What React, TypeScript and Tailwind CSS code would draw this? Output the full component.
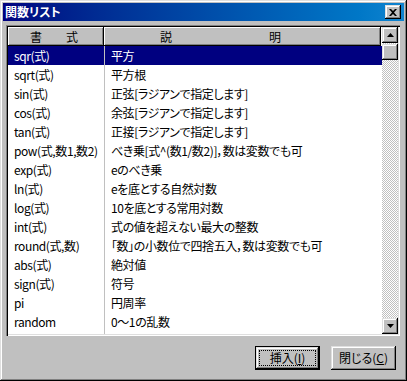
import React from "react";

const kansu = [
  { shiki: "sqr(式)", setsumei: "平方" },
  { shiki: "sqrt(式)", setsumei: "平方根" },
  { shiki: "sin(式)", setsumei: "正弦[ラジアンで指定します]" },
  { shiki: "cos(式)", setsumei: "余弦[ラジアンで指定します]" },
  { shiki: "tan(式)", setsumei: "正接[ラジアンで指定します]" },
  { shiki: "pow(式,数1,数2)", setsumei: "べき乗[式^(数1/数2)]，数は変数でも可" },
  { shiki: "exp(式)", setsumei: "eのべき乗" },
  { shiki: "ln(式)", setsumei: "eを底とする自然対数" },
  { shiki: "log(式)", setsumei: "10を底とする常用対数" },
  { shiki: "int(式)", setsumei: "式の値を超えない最大の整数" },
  { shiki: "round(式,数)", setsumei: "「数」の小数位で四捨五入，数は変数でも可" },
  { shiki: "abs(式)", setsumei: "絶対値" },
  { shiki: "sign(式)", setsumei: "符号" },
  { shiki: "pi", setsumei: "円周率" },
  { shiki: "random", setsumei: "0～1の乱数" },
];

const raised =
  "bg-[#c0c0c0] shadow-[inset_-1px_-1px_#000,inset_1px_1px_#dfdfdf,inset_-2px_-2px_#808080,inset_2px_2px_#fff]";

const header =
  "bg-[#c0c0c0] shadow-[inset_-1px_-1px_#000,inset_1px_1px_#fff,inset_-2px_-2px_#808080]";

function ScrollButton({ up }: { up?: boolean }) {
  return (
    <div className={`flex h-[16px] w-[16px] items-center justify-center ${raised}`}>
      <svg width="7" height="4" viewBox="0 0 7 4">
        {up ? (
          <polygon points="3.5,0 7,4 0,4" fill="#000" />
        ) : (
          <polygon points="0,0 7,0 3.5,4" fill="#000" />
        )}
      </svg>
    </div>
  );
}

export default function App() {
  return (
    <div
      className={`flex h-[381px] w-[407px] flex-col p-[3px] text-[12px] text-black [font-family:'Noto_Sans_CJK_JP',sans-serif] [font-feature-settings:'palt'] ${raised}`}
    >
      {/* タイトルバー */}
      <div className="flex h-[18px] items-center justify-between bg-linear-to-r from-[#000080] to-[#1084d0] pl-[2px] pr-[3px]">
        <span className="text-[12px] font-bold leading-none text-white">関数リスト</span>
        <div className={`flex h-[14px] w-[16px] items-center justify-center ${raised}`}>
          <svg width="8" height="7" viewBox="0 0 8 7">
            <path d="M0 0h2l2 2 2-2h2L5 3.5 8 7H6L4 5 2 7H0l3-3.5z" fill="#000" />
          </svg>
        </div>
      </div>

      {/* リスト */}
      <div className="ml-[3px] mt-[4px] flex h-[311px] w-[394px] p-[2px] shadow-[inset_1px_1px_#808080,inset_2px_2px_#000,inset_-1px_-1px_#fff,inset_-2px_-2px_#dfdfdf]">
        <div className="flex w-[374px] flex-col bg-white">
          <div className="flex h-[19px]">
            <div className={`flex w-[96px] items-center justify-between pl-[22px] pr-[26px] ${header}`}>
              <span>書</span>
              <span>式</span>
            </div>
            <div className={`flex w-[277px] items-center justify-between pl-[56px] pr-[100px] ${header}`}>
              <span>説</span>
              <span>明</span>
            </div>
          </div>
          {kansu.map((k, i) => (
            <div
              key={k.shiki}
              className={`flex h-[19px] items-center leading-[19px] tracking-[-0.4px] ${
                i === 0 ? "bg-[#000080] text-white" : ""
              }`}
            >
              <div className="h-full w-[97px] whitespace-nowrap border-r border-[#c0c0c0] pl-[6px]">
                {k.shiki}
              </div>
              <div className="h-full flex-1 whitespace-nowrap pl-[6px]">{k.setsumei}</div>
            </div>
          ))}
          <div className="flex flex-1">
            <div className="w-[97px] border-r border-[#c0c0c0]" />
          </div>
        </div>

        {/* スクロールバー */}
        <div className="flex w-[16px] flex-col bg-[repeating-conic-gradient(#c0c0c0_0%_25%,#ffffff_0%_50%)] bg-[length:2px_2px]">
          <ScrollButton up />
          <div className={`mt-[1px] h-[16px] w-[16px] ${raised}`} />
          <div className="flex-1" />
          <ScrollButton />
        </div>
      </div>

      {/* ボタン */}
      <div className="mt-[10px] flex justify-end gap-[11px] pr-[8px]">
        <div className="h-[24px] w-[65px] border border-black">
          <div className={`flex h-full w-full items-center justify-center p-[3px] ${raised}`}>
            <div className="flex h-full w-full items-center justify-center border border-dotted border-black leading-none">
              挿入(<u>I</u>)
            </div>
          </div>
        </div>
        <div className={`flex h-[24px] w-[65px] items-center justify-center leading-none ${raised}`}>
          閉じる(<u>C</u>)
        </div>
      </div>
    </div>
  );
}
